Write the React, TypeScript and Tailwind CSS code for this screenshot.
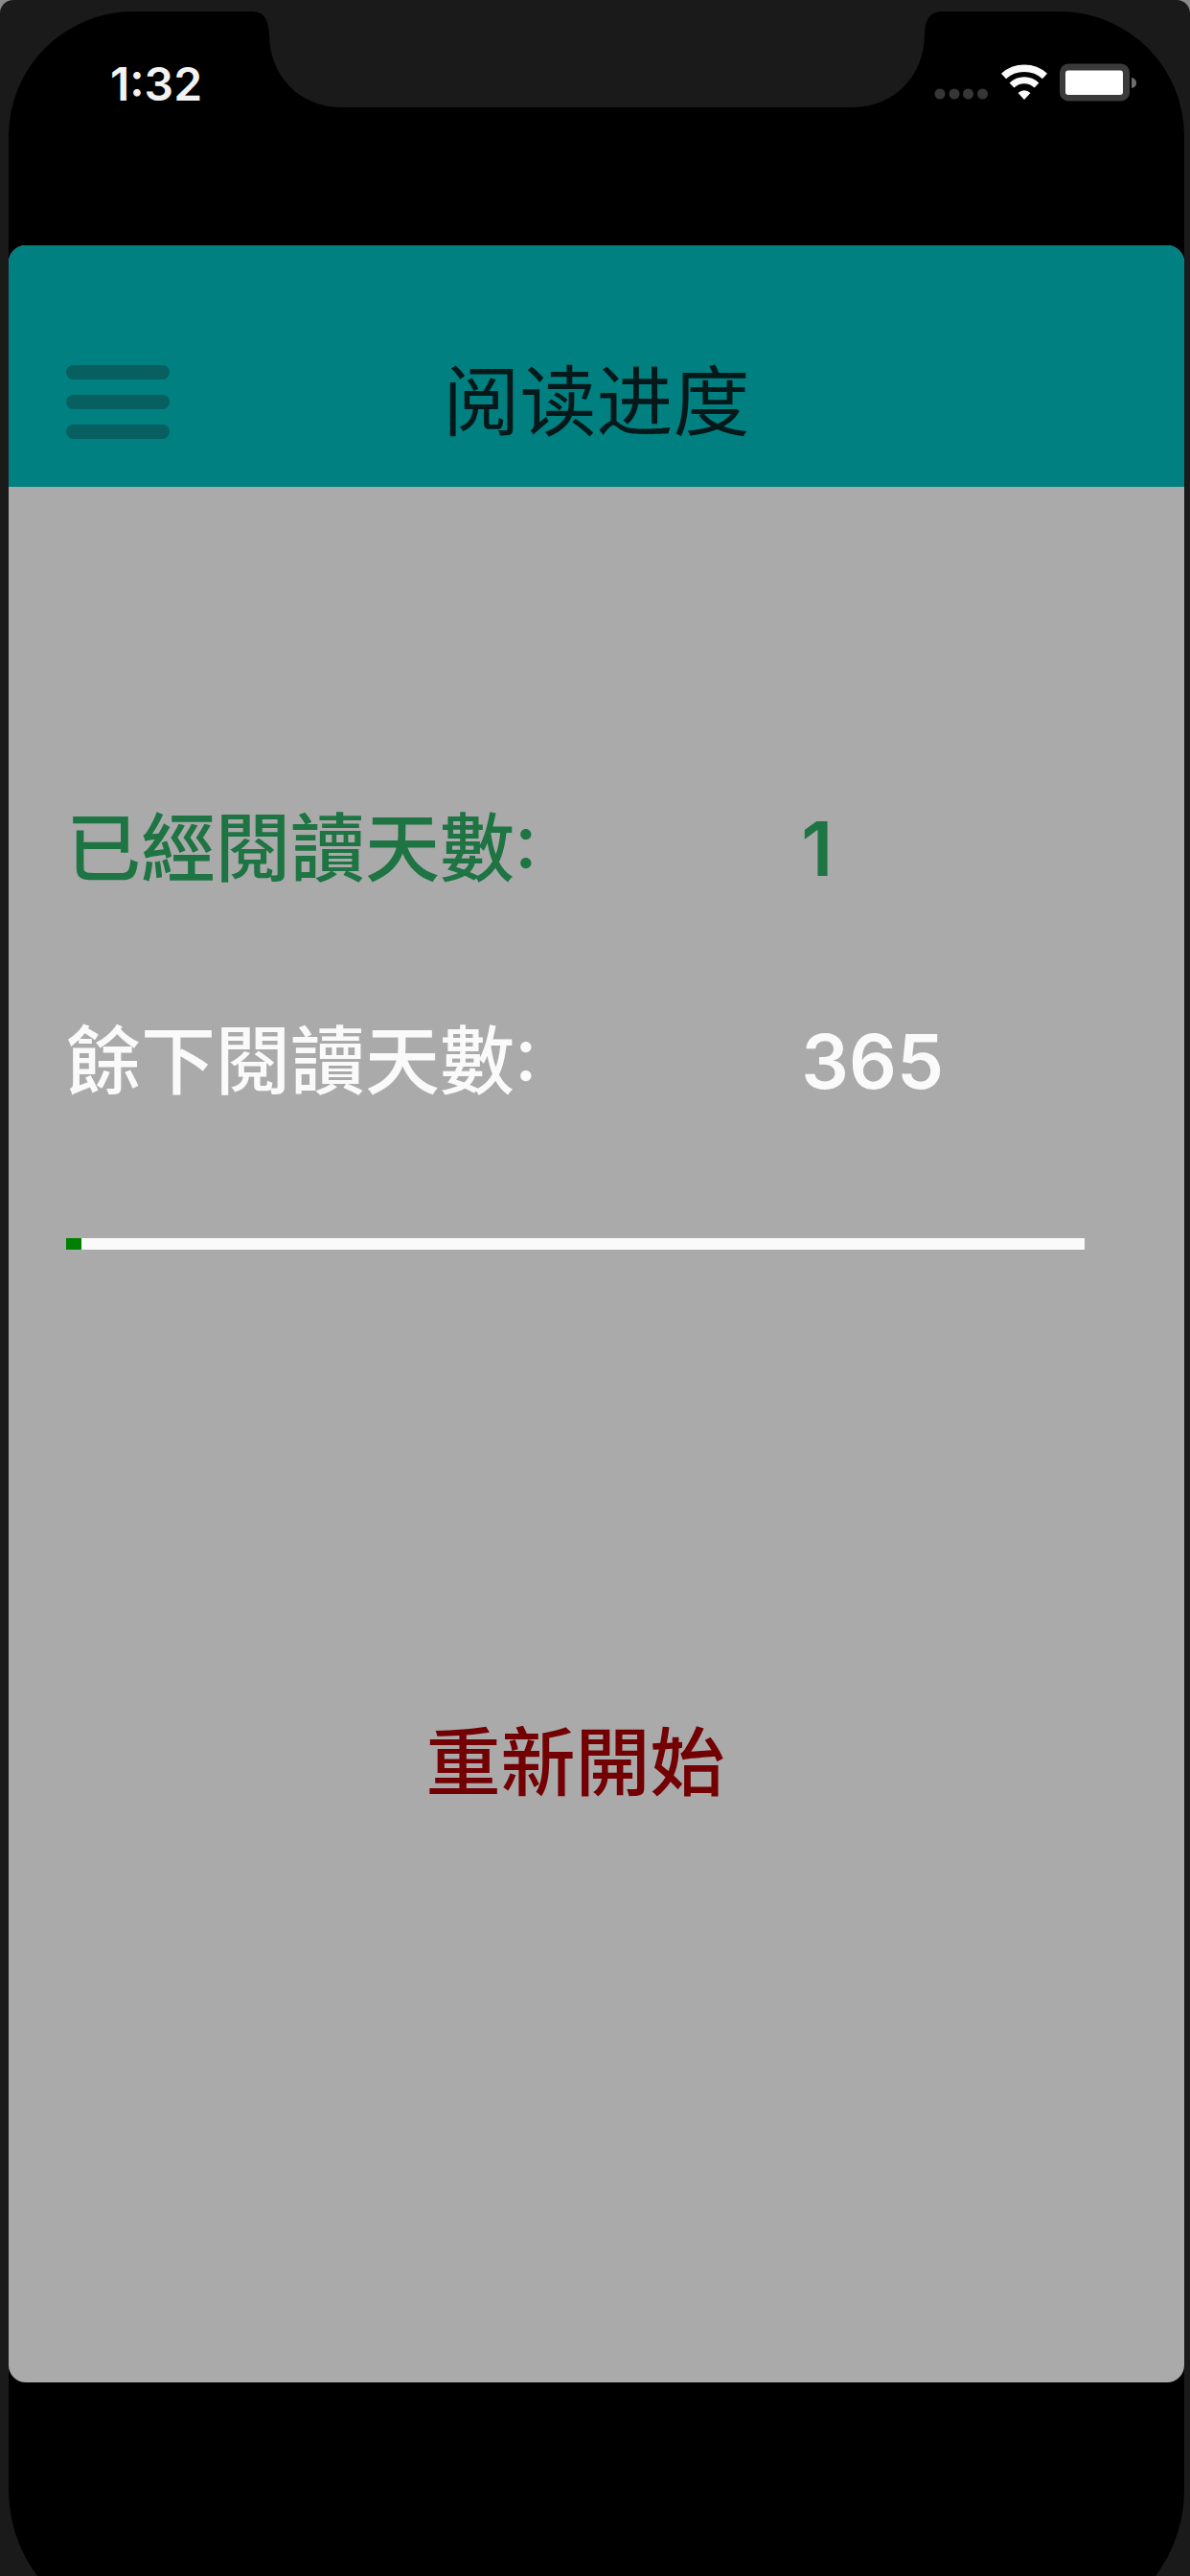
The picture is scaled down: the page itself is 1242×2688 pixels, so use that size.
interface Stat {
  id: string;
  label: string;
  value: number;
  color: string;
}

const daysRead = 1;
const daysLeft = 365;

const stats: Stat[] = [
  { id: "read", label: "已經閱讀天數:", value: daysRead, color: "text-[#1e7443]" },
  { id: "left", label: "餘下閱讀天數:", value: daysLeft, color: "text-[#fafafa]" },
];

function Notch() {
  return (
    <svg
      className="absolute top-0 left-1/2 -translate-x-1/2"
      width="722"
      height="100"
      viewBox="0 0 722 100"
      fill="#1a1a1a"
      aria-hidden="true"
    >
      <path d="M0 0C14 0 18 8 19 24C19 66 50 100 94 100H628C672 100 703 66 703 24C704 8 708 0 722 0Z" />
    </svg>
  );
}

function StatusBar() {
  return (
    <div className="flex h-[244px] items-start justify-between pt-[52px] pr-[50px] pl-[106px]">
      <span className="text-[48px] leading-[48px] font-semibold text-[#f2f2f2]">1:32</span>
      <div className="flex items-center gap-3 pt-[2px]">
        <svg width="57" height="40" viewBox="0 0 57 40" fill="#363636" aria-hidden="true">
          <circle cx="6" cy="32" r="5.5" />
          <circle cx="21" cy="32" r="5.5" />
          <circle cx="35.500" cy="32" r="5.5" />
          <circle cx="50.500" cy="32" r="5.5" />
        </svg>
        <svg width="50" height="40" viewBox="0 0 50 40" fill="none" stroke="#fafafa" aria-hidden="true">
          <path d="M3.500 13.500C15.500 2.500 34.500 2.500 46.500 13.500" strokeWidth="7.500" />
          <path d="M12 23C19.500 16 30.500 16 38 23" strokeWidth="7" />
          <path d="M18.500 31Q25 25.500 31.500 31L25 38Z" fill="#fafafa" stroke="none" />
        </svg>
        <svg width="80" height="40" viewBox="0 0 80 40" aria-hidden="true">
          <rect x="0" y="0.500" width="73" height="39" rx="9" fill="#3b3b3b" />
          <rect x="6" y="7.500" width="60" height="25.500" rx="3" fill="#fff" />
          <path d="M75 15Q80 16 80 20.500T75 26Z" fill="#6e6e6e" />
        </svg>
      </div>
    </div>
  );
}

function Header() {
  return (
    <header className="grid h-[252px] grid-cols-[1fr_auto_1fr] items-center bg-[#008080] px-[60px] pt-[74px]">
      <button type="button" aria-label="Menu" className="flex w-[108px] flex-col gap-4">
        <span className="h-[15px] w-full rounded-full bg-[#075f5f]" />
        <span className="h-[15px] w-full rounded-full bg-[#075f5f]" />
        <span className="h-[15px] w-full rounded-full bg-[#075f5f]" />
      </button>
      <h1 className="font-['Inter','Noto_Sans_CJK_SC',sans-serif] text-[80px] leading-[80px] font-normal text-[#06191a]">
        阅读进度
      </h1>
    </header>
  );
}

function Progress() {
  const total = daysRead + daysLeft;

  return (
    <div
      role="progressbar"
      aria-label="阅读进度"
      aria-valuenow={daysRead}
      aria-valuemin={0}
      aria-valuemax={total}
      className="h-3 w-full bg-[#fafafa]"
    >
      <div className="h-full min-w-4 bg-[#008000]" style={{ width: `${(daysRead / total) * 100}%` }} />
    </div>
  );
}

function App() {
  return (
    <div className="h-screen overflow-hidden bg-[#8a8a8a] font-['Inter','Noto_Sans_CJK_TC',sans-serif]">
      <div className="flex min-h-screen flex-col rounded-t-[14px] bg-[#1a1a1a] pt-3 pr-[6px] pl-[9px]">
        {/* the bottom corners run past the window edge */}
        <div className="relative -mb-[60px] flex flex-1 flex-col rounded-t-[130px] rounded-b-[150px] bg-black pb-[262px]">
          <Notch />
          <StatusBar />
          <div className="flex flex-1 flex-col overflow-hidden rounded-[18px] bg-[#aaaaaa]">
            <Header />
            <main className="flex flex-col pt-[338px] pr-[104px] pl-[60px]">
              <dl className="flex flex-col gap-[142px]">
                {stats.map((stat) => (
                  <div
                    key={stat.id}
                    className={`grid grid-cols-[72%_1fr] items-center text-[78px] leading-[80px] ${stat.color}`}
                  >
                    <dt className="font-medium [font-feature-settings:'case']">{stat.label}</dt>
                    <dd className="pl-[2px] font-semibold">{stat.value}</dd>
                  </div>
                ))}
              </dl>
              <div className="pt-[144px]">
                <Progress />
              </div>
              <button
                type="button"
                className="mt-[496px] self-center text-[78px] leading-[80px] font-medium text-[#730003]"
              >
                重新開始
              </button>
            </main>
          </div>
        </div>
      </div>
    </div>
  );
}

export default App;
